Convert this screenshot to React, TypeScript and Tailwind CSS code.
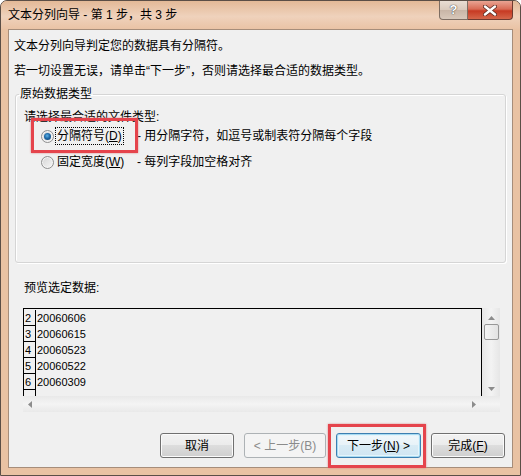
import React from "react";

const ui = "font-['Liberation_Sans','Noto_Sans_CJK_SC',sans-serif] text-[12px] leading-[16px] text-black";

const rows: [string, string][] = [
  ["2", "20060606"],
  ["3", "20060615"],
  ["4", "20060523"],
  ["5", "20060522"],
  ["6", "20060309"],
  ["", ""],
];

function Radio({ checked }: { checked?: boolean }) {
  return (
    <span className="flex h-[13px] w-[13px] shrink-0 items-center justify-center rounded-full border border-[#8e8f8f] bg-[linear-gradient(135deg,#d4d4d4,#f7f7f7)] shadow-[inset_0_0_0_1px_#f4f4f4]">
      {checked && (
        <span className="h-[7px] w-[7px] rounded-full bg-[radial-gradient(circle_at_45%_40%,#5fb2e6_0%,#1f6aa8_45%,#0b3a66_100%)]" />
      )}
    </span>
  );
}

function Arrow({ dir }: { dir: "up" | "down" | "left" | "right" }) {
  const pts = {
    up: "0,4 3.5,0 7,4",
    down: "0,0 7,0 3.5,4",
    left: "4,0 4,7 0,3.5",
    right: "0,0 0,7 4,3.5",
  }[dir];
  const vert = dir === "up" || dir === "down";
  return (
    <svg width={vert ? 7 : 4} height={vert ? 4 : 7} viewBox={vert ? "0 0 7 4" : "0 0 4 7"}>
      <polygon points={pts} fill="#8c8c8c" />
    </svg>
  );
}

export default function App() {
  return (
    <div className={`h-[476px] w-[521px] bg-white ${ui}`}>
      <div className="flex h-full w-full flex-col rounded-t-[7px] border border-[#5b4e46] bg-[#e9c2a3]">
        {/* title bar */}
        <div className="flex h-[28px] items-start rounded-t-[6px] bg-[linear-gradient(180deg,#e3b997_0%,#efd2bc_55%,#eac3a5_100%)]">
          <span className="pl-[7px] pt-[6px]">文本分列向导 - 第 1 步，共 3 步</span>
          <div className="ml-auto mr-[7px] flex">
            <div className="flex h-[19px] w-[29px] items-center justify-center rounded-bl-[4px] border border-t-0 border-[#7d6d62] bg-[linear-gradient(180deg,#e9ddd3_0%,#d9c9bc_50%,#c8b5a6_51%,#d8c8ba_100%)] text-[13px] font-bold text-white [text-shadow:0_0_1px_#404040,0_0_1px_#404040]">
              ?
            </div>
            <div className="flex h-[19px] w-[45px] items-center justify-center rounded-br-[4px] border border-l-0 border-t-0 border-[#6f3a30] bg-[linear-gradient(180deg,#e9a493_0%,#d86b55_45%,#c73a23_55%,#d5664a_100%)]">
              <svg width="14" height="11" viewBox="0 0 14 11">
                <path d="M2 1.5 L12 9.5 M12 1.5 L2 9.5" stroke="#5a2a22" strokeWidth="4" strokeLinecap="round" />
                <path d="M2 1.5 L12 9.5 M12 1.5 L2 9.5" stroke="#ffffff" strokeWidth="2.4" strokeLinecap="round" />
              </svg>
            </div>
          </div>
        </div>

        {/* client area */}
        <div className="mx-[7px] flex h-[439px] flex-col border border-[#a68d7a] bg-[#f0f0f0]">
          <p className="mt-[8px] pl-[5px]">文本分列向导判定您的数据具有分隔符。</p>
          <p className="mt-[9px] pl-[5px]">若一切设置无误，请单击“下一步”，否则请选择最合适的数据类型。</p>

          <fieldset className="ml-[6px] mt-[7px] w-[491px] rounded-[3px] border border-[#d5d5d5] pb-[91px] pl-[3px] shadow-[inset_1px_1px_0_#ffffff,1px_1px_0_#ffffff]">
            <legend className="px-[1px] leading-[16px]">原始数据类型</legend>
            <div className="mt-[7px] pl-[5px]">请选择最合适的文件类型:</div>

            <div className="relative mt-[2px] flex h-[18px] items-center pl-[22px]">
              <Radio checked />
              <span className="ml-[2px] w-[81px]">
                <span className="px-[1px] py-[1px] outline outline-1 outline-dotted outline-black">
                  分隔符号(<u>D</u>)
                </span>
              </span>
              <span>- 用分隔字符，如逗号或制表符分隔每个字段</span>
              <div className="absolute left-[12px] top-[-9px] z-10 h-[35px] w-[107px] border-[3px] border-[#e5444c] shadow-[0_0_2px_#d98a8a]" />
            </div>

            <div className="mt-[8px] flex h-[18px] items-center pl-[22px]">
              <Radio />
              <span className="ml-[2px] w-[81px] pl-[1px]">
                固定宽度(<u>W</u>)
              </span>
              <span>- 每列字段加空格对齐</span>
            </div>
          </fieldset>

          <p className="mt-[17px] pl-[15px]">预览选定数据:</p>

          {/* preview */}
          <div className="ml-[14px] mt-[12px] flex h-[104px] w-[477px] flex-col">
            <div className="flex h-[88px]">
              <div className="w-[459px] overflow-hidden border border-b-0 border-black bg-[#f0f0f0] font-['Liberation_Sans',sans-serif] text-[11px]">
                <div className="mt-[1px]">
                  {rows.map(([n, v], i) => (
                    <div key={i} className="flex h-[16px]">
                      <div className="flex w-[12px] items-end border-b border-r border-black pl-[1px] leading-[13px]">
                        {n}
                      </div>
                      <div className="pl-[1px] leading-[16px]">{v}</div>
                    </div>
                  ))}
                </div>
              </div>
              <div className="flex w-[18px] flex-col items-center bg-[linear-gradient(90deg,#e6e6e6,#f3f3f3,#e6e6e6)]">
                <div className="mt-[8px]">
                  <Arrow dir="up" />
                </div>
                <div className="mt-[4px] h-[16px] w-[15px] rounded-[2px] border border-[#979797] bg-[linear-gradient(90deg,#f4f4f4,#e2e2e2)]" />
                <div className="mt-auto mb-[5px]">
                  <Arrow dir="down" />
                </div>
              </div>
            </div>
            <div className="flex h-[16px] items-center justify-between bg-[linear-gradient(180deg,#e9e9e9,#f4f4f4,#e9e9e9)] pl-[5px] pr-[24px]">
              <Arrow dir="left" />
              <Arrow dir="right" />
            </div>
          </div>

          {/* buttons */}
          <div className="mt-[21px] flex justify-end gap-[10px] pr-[7px]">
            <button className="h-[25px] w-[74px] rounded-[3px] border border-[#707070] bg-[linear-gradient(180deg,#f2f2f2_0%,#ebebeb_50%,#dddddd_50%,#cfcfcf_100%)] shadow-[inset_0_0_0_1px_#fbfbfb]">
              取消
            </button>
            <button className="h-[25px] w-[82px] rounded-[3px] border border-[#adb2b5] bg-[#f4f4f4] text-[#8b8b8b]">
              &lt; 上一步(B)
            </button>
            <div className="relative">
              <button className="h-[25px] w-[85px] rounded-[3px] border border-[#3c7fb1] bg-[linear-gradient(180deg,#f2f8fb_0%,#e7f2f8_50%,#d8ebf5_50%,#cfe5f2_100%)] shadow-[inset_0_0_0_1px_#a8dbf2,inset_0_0_0_2px_#e4f4fb]">
                下一步(<u>N</u>) &gt;
              </button>
              <div className="absolute left-[-8px] top-[-9px] h-[44px] w-[98px] border-[3px] border-[#e5444c] shadow-[0_0_2px_#d98a8a]" />
            </div>
            <button className="h-[25px] w-[74px] rounded-[3px] border border-[#707070] bg-[linear-gradient(180deg,#f2f2f2_0%,#ebebeb_50%,#dddddd_50%,#cfcfcf_100%)] shadow-[inset_0_0_0_1px_#fbfbfb]">
              完成(<u>F</u>)
            </button>
          </div>
        </div>
      </div>
    </div>
  );
}
